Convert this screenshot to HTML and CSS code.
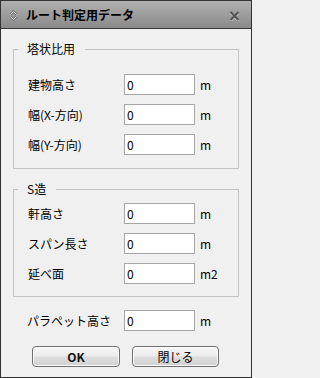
FILE: index.html
```html
<!DOCTYPE html>
<html lang="ja">
<head>
<meta charset="utf-8">
<link rel="stylesheet" href="styles.css">
</head>
<body>
<div class="window">
  <div class="titlebar">
    <svg class="ticon" width="9" height="11" viewBox="0 0 9 11">
      <path d="M1.5 4.5 L4.5 1.5 L7.5 4.5" fill="none" stroke="#6a6a6a" stroke-width="2"/>
      <path d="M1.5 6.5 L4.5 9.5 L7.5 6.5" fill="none" stroke="#6a6a6a" stroke-width="2"/>
      <path d="M1.5 4.5 L4.5 1.5 L7.5 4.5" fill="none" stroke="#e4e4e4" stroke-width="1"/>
      <path d="M1.5 6.5 L4.5 9.5 L7.5 6.5" fill="none" stroke="#e4e4e4" stroke-width="1"/>
    </svg>
    <span class="title">ルート判定用データ</span>
    <svg class="close" width="11" height="10" viewBox="0 0 11 10">
      <path d="M1.5 1 L9.5 9 M9.5 1 L1.5 9" stroke="#d0d0d0" stroke-width="2.4" transform="translate(0 0.8)"/>
      <path d="M1.5 1 L9.5 9 M9.5 1 L1.5 9" stroke="#555" stroke-width="2.2"/>
    </svg>
  </div>
  <div class="content">
    <fieldset class="group g1">
      <legend>塔状比用</legend>
      <div class="rows">
        <div class="row"><span class="label">建物高さ</span><input class="field" type="text" value="0"><span class="unit">m</span></div>
        <div class="row"><span class="label">幅(X-方向)</span><input class="field" type="text" value="0"><span class="unit">m</span></div>
        <div class="row"><span class="label">幅(Y-方向)</span><input class="field" type="text" value="0"><span class="unit">m</span></div>
      </div>
    </fieldset>
    <fieldset class="group g2">
      <legend>S造</legend>
      <div class="rows">
        <div class="row"><span class="label">軒高さ</span><input class="field" type="text" value="0"><span class="unit">m</span></div>
        <div class="row"><span class="label">スパン長さ</span><input class="field" type="text" value="0"><span class="unit">m</span></div>
        <div class="row"><span class="label">延べ面</span><input class="field" type="text" value="0"><span class="unit">m2</span></div>
      </div>
    </fieldset>
    <div class="row parapet"><span class="label">パラペット高さ</span><input class="field" type="text" value="0"><span class="unit">m</span></div>
    <div class="buttons">
      <button class="btn ok" type="button">OK</button>
      <button class="btn cancel" type="button">閉じる</button>
    </div>
  </div>
</div>
</body>
</html>
```
FILE: styles.css
```css
* { box-sizing: border-box; }
html, body { margin: 0; padding: 0; }
body {
  font-family: "Noto Sans CJK JP", "Noto Sans", sans-serif;
  font-size: 12px;
  color: #000;
  background: #f0f0f0;
}
.window {
  width: 252px;
  height: 378px;
  border: 1px solid #333;
  background: #f0f0f0;
  display: flex;
  flex-direction: column;
}
.titlebar {
  height: 28px;
  border-bottom: 1px solid #3a3a3a;
  background: linear-gradient(#b0b0b0, #8a8a8a);
  display: flex;
  align-items: center;
  padding-left: 8px;
  padding-right: 11px;
}
.ticon { display: block; margin-right: 8px; margin-top: 1px; }
.title {
  font-weight: bold;
  font-size: 12px;
  line-height: 14px;
  flex: 1;
  letter-spacing: 0;
}
.close { display: block; margin-top: 2px; }
.content {
  padding: 12px 12px 0 12px;
  display: flex;
  flex-direction: column;
}
.group {
  margin: 0;
  padding: 0;
  border: 1px solid #c2c2c2;
  min-width: 0;
}
.group legend {
  margin-left: 4px;
  padding: 0 10px 0 9px;
  font-size: 12px;
  line-height: 16px;
}
.g1 { padding-top: 17px; padding-bottom: 13px; }
.g2 { margin-top: 12px; padding-top: 6px; padding-bottom: 12px; }
.rows {
  display: flex;
  flex-direction: column;
  gap: 9px;
  padding-left: 14px;
}
.row {
  display: flex;
  align-items: center;
  height: 21px;
}
.label {
  width: 96px;
  line-height: 14px;
  white-space: nowrap;
}
.field {
  width: 71px;
  height: 21px;
  margin: 0;
  border: 1px solid #a6a6a6;
  background: #fff;
  padding: 0 0 0 2px;
  font-family: "Noto Sans CJK JP", "Noto Sans", sans-serif;
  font-size: 12px;
  color: #000;
  outline: none;
}
.unit {
  margin-left: 5px;
  line-height: 14px;
}
.parapet {
  margin-top: 13px;
  padding-left: 14px;
}
.parapet .label { width: 97px; }
.buttons {
  margin-top: 15px;
  display: flex;
  justify-content: center;
  gap: 12px;
  margin-right: 1px;
}
.btn {
  width: 88px;
  height: 21px;
  margin: 0;
  padding: 0;
  border: 1px solid #707070;
  border-radius: 4px;
  background: linear-gradient(#f6f6f6, #ececec 48%, #dedede 52%, #d2d2d2);
  box-shadow: inset 0 0 0 1px #fcfcfc;
  font-family: "Noto Sans CJK JP", "Noto Sans", sans-serif;
  font-size: 12px;
  line-height: 14px;
  color: #000;
}
.ok { font-weight: bold; color: #111; }
.cancel { width: 87px; }
```
